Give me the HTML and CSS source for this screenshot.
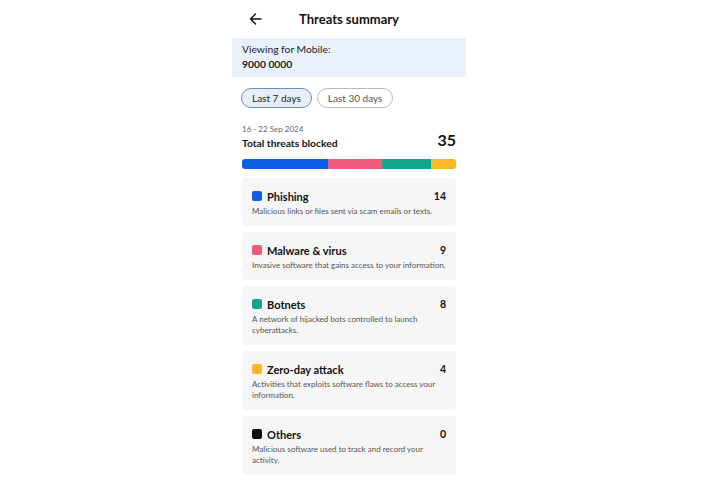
FILE: index.html
```html
<!DOCTYPE html>
<html lang="en">
<head>
<meta charset="utf-8">
<title>Threats summary</title>
<link rel="stylesheet" href="styles.css">
</head>
<body>
<div class="screen">
  <header class="topbar">
    <svg class="back" width="13" height="12" viewBox="0 0 13 12" aria-hidden="true">
      <path d="M12 6H1.5M6.5 1L1.5 6L6.5 11" fill="none" stroke="#111" stroke-width="1.4" stroke-linecap="round" stroke-linejoin="round"/>
    </svg>
    <h1 class="title">Threats summary</h1>
  </header>
  <section class="viewing">
    <div class="viewing-label">Viewing for Mobile:</div>
    <div class="viewing-number">9000 0000</div>
  </section>
  <div class="content">
    <div class="pills">
      <span class="pill pill-active">Last 7 days</span>
      <span class="pill">Last 30 days</span>
    </div>
    <div class="summary">
      <div class="summary-text">
        <div class="date">16 - 22 Sep 2024</div>
        <div class="total-label">Total threats blocked</div>
      </div>
      <div class="total">35</div>
    </div>
    <div class="bar">
      <span class="seg seg-blue" style="width:86px"></span>
      <span class="seg seg-pink" style="width:54px"></span>
      <span class="seg seg-teal" style="width:49px"></span>
      <span class="seg seg-yellow" style="width:25px"></span>
    </div>
    <div class="cards">
      <div class="card">
        <div class="card-head"><span class="sq sq-blue"></span><span class="card-title">Phishing</span><span class="count">14</span></div>
        <p class="desc">Malicious links or files sent via scam emails or texts.</p>
      </div>
      <div class="card">
        <div class="card-head"><span class="sq sq-pink"></span><span class="card-title">Malware &amp; virus</span><span class="count">9</span></div>
        <p class="desc">Invasive software that gains access to your information.</p>
      </div>
      <div class="card">
        <div class="card-head"><span class="sq sq-teal"></span><span class="card-title">Botnets</span><span class="count">8</span></div>
        <p class="desc">A network of hijacked bots controlled to launch cyberattacks.</p>
      </div>
      <div class="card">
        <div class="card-head"><span class="sq sq-yellow"></span><span class="card-title">Zero-day attack</span><span class="count">4</span></div>
        <p class="desc">Activities that exploits software flaws to access your information.</p>
      </div>
      <div class="card">
        <div class="card-head"><span class="sq sq-black"></span><span class="card-title">Others</span><span class="count">0</span></div>
        <p class="desc">Malicious software used to track and record your activity.</p>
      </div>
    </div>
  </div>
</div>
</body>
</html>
```

FILE: styles.css
```css
* { box-sizing: border-box; }
html, body { margin: 0; padding: 0; background: #fff; }
body { font-family: Lato, "Noto Sans", sans-serif; color: #1a1a1a; }

.screen { width: 234px; margin-left: 232px; }

.topbar {
  height: 38px;
  display: grid;
  grid-template-columns: 1fr auto 1fr;
  align-items: center;
  padding: 0 17px;
}
.back { display: block; grid-column: 1; grid-row: 1; }
.title {
  margin: 0;
  font-size: 13px;
  font-weight: 700;
  color: #111;
  grid-column: 2;
  grid-row: 1;
}

.viewing {
  background: #e9f1fb;
  height: 39px;
  padding: 4px 10px 0;
  font-size: 10.3px;
  line-height: 15px;
  color: #222;
}
.viewing-number { font-weight: 700; }

.content { padding: 0 10px; }

.pills { display: flex; gap: 5px; padding-top: 11px; margin-left: -1px; }
.pill {
  height: 20px;
  padding: 0 10px;
  border: 1px solid #b9b9b9;
  border-radius: 10px;
  font-size: 10px;
  line-height: 18px;
  color: #555;
  background: #fff;
}
.pill-active {
  background: #e6eef9;
  border-color: #6e8cb4;
  color: #222;
}

.summary {
  display: flex;
  justify-content: space-between;
  align-items: flex-end;
  margin-top: 16px;
}
.date { font-size: 8px; line-height: 10px; color: #666; }
.total-label { font-size: 10.3px; font-weight: 700; line-height: 14px; margin-top: 2px; color: #111; }
.total { font-size: 16px; font-weight: 700; line-height: 20px; color: #111; margin-bottom: 0; }

.bar {
  display: flex;
  height: 10px;
  margin-top: 9px;
  border-radius: 3px;
  overflow: hidden;
}
.seg { display: block; height: 100%; }
.seg-blue, .sq-blue { background: #0d5fe3; }
.seg-pink, .sq-pink { background: #f05b7b; }
.seg-teal, .sq-teal { background: #14a48a; }
.seg-yellow, .sq-yellow { background: #fbb829; }
.sq-black { background: #111; }

.cards { display: flex; flex-direction: column; gap: 6px; margin-top: 9px; }
.card {
  background: #f6f6f6;
  border-radius: 4px;
  padding: 11px 10px 9px;
}
.card-head { display: flex; align-items: center; height: 14px; }
.sq { width: 10px; height: 10px; border-radius: 2px; margin-right: 5px; flex: none; }
.card-title { font-size: 11px; font-weight: 700; color: #111; flex: 1; }
.count { font-size: 10.5px; font-weight: 700; color: #111; }
.desc {
  margin: 3px 0 0;
  font-size: 8px;
  line-height: 11px;
  color: #555;
}
```
